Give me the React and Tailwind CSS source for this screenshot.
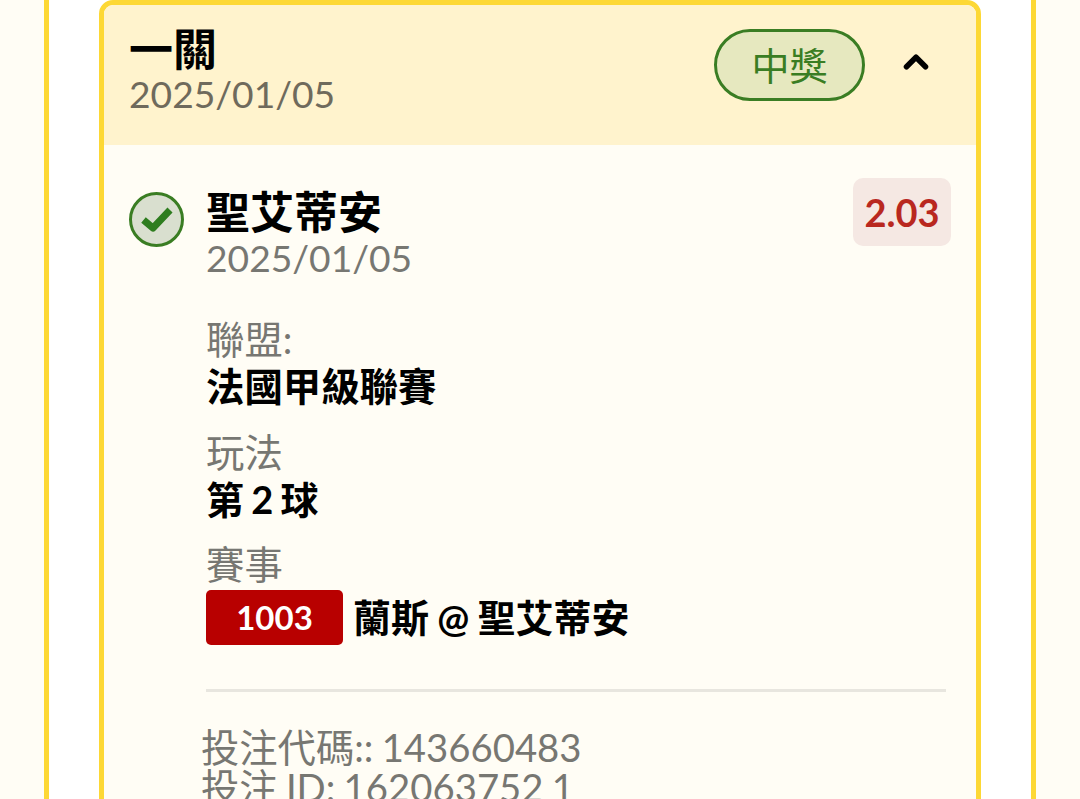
import React from 'react';
import { ChevronUp } from 'lucide-react';

const font = "font-['Lato','Noto_Sans_CJK_TC',sans-serif]";

function Field({ label, children, className = '' }) {
    return (
        <div className={`flex flex-col ${className}`}>
            <div className="text-[38.4px] leading-[47px] text-[#777772]">{label}</div>
            {children}
        </div>
    );
}

export default function App() {
    return (
        <div className={`h-[799px] w-[1080px] overflow-hidden bg-[#fffdf5] pl-[44px] pr-[44px] ${font}`}>
            <div className="h-full w-[992px] border-x-[5px] border-[#fdd835] bg-white px-[50px]">
                <div className="h-[900px] w-[882px] rounded-t-[14px] border-[5px] border-[#fdd835] bg-[#fffdf5] overflow-hidden">
                    {/* Header */}
                    <div className="flex h-[140px] items-start justify-between bg-[#fff3cd] pl-[25px] pr-[41px]">
                        <div className="flex flex-col pt-[20px]">
                            <div className="text-[44px] leading-[48px] font-bold text-black">一關</div>
                            <div className="text-[37.2px] leading-[42px] text-[#6f6a5c]">2025/01/05</div>
                        </div>
                        <div className="flex items-start gap-[32px] pt-[24px]">
                            <div className="flex h-[72px] w-[151px] items-center justify-center rounded-full border-[3px] border-[#3a7d23] bg-[#e6e8bf] text-[38px] text-[#3a7d23]">中獎</div>
                            <ChevronUp size={38} strokeWidth={3.5} className="mt-[14px] text-black" />
                        </div>
                    </div>

                    {/* Selection */}
                    <div className="flex items-start justify-between pt-[33px] pl-[25px] pr-[25px]">
                        <div className="flex gap-[22px]">
                            <div className="mt-[14px] flex h-[55px] w-[55px] items-center justify-center rounded-full border-[3px] border-[#3a7d23] bg-[#d9dfcf]">
                                <svg viewBox="0 0 40 40" className="h-[40px] w-[40px]">
                                    <path d="M6.5 20 L16 28 L33 10" fill="none" stroke="#2e7d1f" strokeWidth="7" strokeLinejoin="round" />
                                </svg>
                            </div>
                            <div className="flex flex-col pt-[9px]">
                                <div className="text-[44px] leading-[50px] font-bold text-black">聖艾蒂安</div>
                                <div className="text-[37.2px] leading-[41px] text-[#777772]">2025/01/05</div>
                                <div className="mt-[38px] flex flex-col gap-[19px]">
                                    <Field label="聯盟:">
                                        <div className="text-[38.4px] leading-[47px] font-bold text-black">法國甲級聯賽</div>
                                    </Field>
                                    <Field label="玩法">
                                        <div className="text-[38px] leading-[47px] font-bold text-black [word-spacing:-2px]">第 2 球</div>
                                    </Field>
                                    <Field label="賽事" className="-mt-px">
                                        <div className="mt-[1px] flex items-center gap-[10px]">
                                            <div className="flex h-[55px] w-[137px] items-center justify-center rounded-[5px] bg-[#b80000] text-[33px] font-bold text-white">1003</div>
                                            <div className="text-[38px] font-bold text-black [word-spacing:-1px]">蘭斯 @ 聖艾蒂安</div>
                                        </div>
                                    </Field>
                                </div>
                            </div>
                        </div>
                        <div className="flex h-[68px] w-[98px] items-center justify-center rounded-[10px] bg-[#f5e8e3] text-[38px] font-bold text-[#b9281f]">2.03</div>
                    </div>

                    {/* Footer */}
                    <div className="mt-[43px] ml-[102px] mr-[30px] border-t-[3px] border-[#e8e6df]" />
                    <div className="mt-[35px] ml-[97px] text-[38.3px] leading-[40px] text-[#777772] [word-spacing:-1.5px]">
                        <div>投注代碼:: 143660483</div>
                        <div>投注 ID: 162063752 1</div>
                    </div>
                </div>
            </div>
        </div>
    );
}
